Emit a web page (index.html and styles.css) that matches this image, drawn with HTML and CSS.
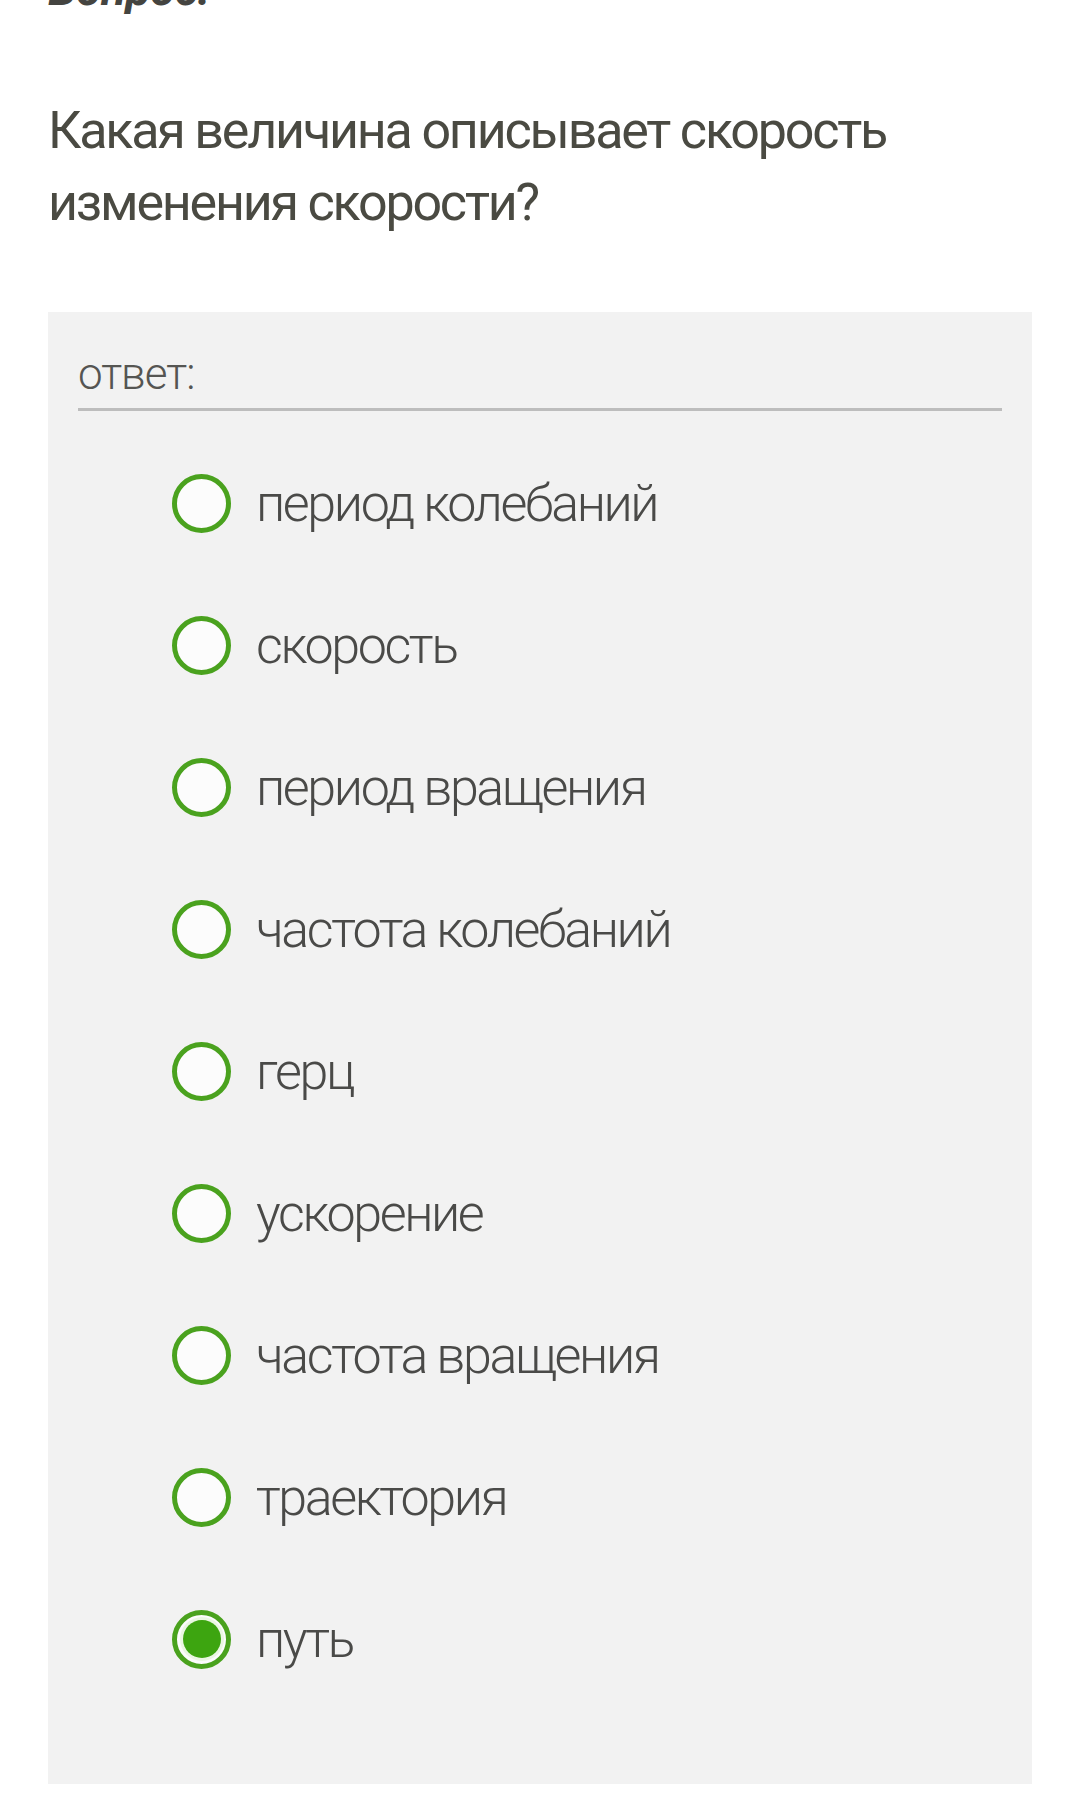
FILE: index.html
```html
<!DOCTYPE html>
<html lang="ru">
<head>
<meta charset="utf-8">
<title>Вопрос</title>
<link rel="stylesheet" href="styles.css">
</head>
<body>
<main class="page">
  <div class="label">Вопрос:</div>
  <h1 class="question">Какая величина описывает скорость изменения скорости?</h1>
  <section class="answer">
    <div class="answer-title">ответ:</div>
    <ul class="options">
      <li class="option"><span class="radio"></span><span class="opt-text">период колебаний</span></li>
      <li class="option"><span class="radio"></span><span class="opt-text">скорость</span></li>
      <li class="option"><span class="radio"></span><span class="opt-text">период вращения</span></li>
      <li class="option"><span class="radio"></span><span class="opt-text">частота колебаний</span></li>
      <li class="option"><span class="radio"></span><span class="opt-text">герц</span></li>
      <li class="option"><span class="radio"></span><span class="opt-text">ускорение</span></li>
      <li class="option"><span class="radio"></span><span class="opt-text">частота вращения</span></li>
      <li class="option"><span class="radio"></span><span class="opt-text">траектория</span></li>
      <li class="option"><span class="radio radio-checked"></span><span class="opt-text">путь</span></li>
    </ul>
  </section>
</main>
</body>
</html>
```

FILE: styles.css
```css
html, body {
  margin: 0;
  padding: 0;
  background: #ffffff;
}

body {
  font-family: Roboto, "Noto Sans", "Liberation Sans", sans-serif;
  overflow: hidden;
}

.page {
  padding: 0 48px;
}

.label {
  margin-top: -39px;
  font-size: 46px;
  line-height: 56px;
  font-weight: 700;
  font-style: italic;
  letter-spacing: -0.5px;
  color: #444440;
}

.question {
  margin: 78px 0 0 0;
  font-size: 52px;
  line-height: 72px;
  font-weight: 400;
  letter-spacing: -2.2px;
  color: #4a4a42;
}

.answer {
  margin-top: 73px;
  background: #f2f2f2;
  padding: 0 30px 74px 30px;
}

.answer-title {
  padding-top: 32px;
  font-size: 44px;
  line-height: 60px;
  font-weight: 300;
  letter-spacing: -1px;
  color: #555552;
  border-bottom: 3px solid #bdbdbd;
  padding-bottom: 4px;
}

.options {
  list-style: none;
  margin: 21px 0 0 0;
  padding: 0 0 0 94px;
}

.option {
  height: 142px;
  display: flex;
  align-items: center;
}

.radio {
  box-sizing: border-box;
  width: 59px;
  height: 59px;
  border-radius: 50%;
  border: 5px solid #4aa21e;
  background: #fcfcfc;
  flex: none;
  display: flex;
  align-items: center;
  justify-content: center;
}

.radio-checked::after {
  content: "";
  width: 38px;
  height: 38px;
  border-radius: 50%;
  background: #3da510;
  box-shadow: 0 0 0 3px #eaf7e2;
}

.opt-text {
  margin-left: 25px;
  font-size: 52px;
  font-weight: 300;
  letter-spacing: -2.4px;
  color: #4a4a48;
}
```
